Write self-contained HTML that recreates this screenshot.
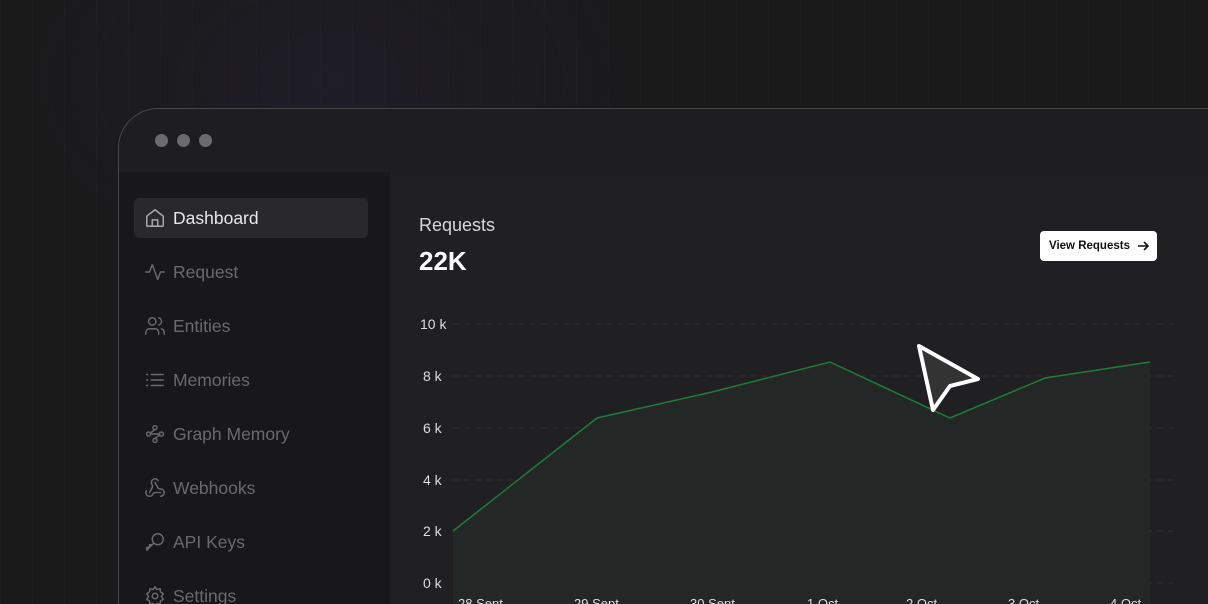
<!DOCTYPE html>
<html style="width:1208px;height:604px;overflow:hidden"><head><meta charset="utf-8"><style>
*{margin:0;padding:0;box-sizing:border-box}
body{width:1208px;height:604px;overflow:hidden;background:#1a1a1b;font-family:"Liberation Sans",sans-serif;position:relative;
background-image:radial-gradient(ellipse 300px 200px at 330px 80px,rgba(45,38,70,.25),transparent),linear-gradient(90deg,rgba(255,255,255,.012) 1px,transparent 1px);background-size:auto,32px 32px}
.win{position:absolute;left:118px;top:108px;width:1120px;height:496px;border:1.5px solid #474749;border-bottom:none;border-radius:40px 0 0 0;background:#1e1e20;overflow:hidden}
.dot{position:absolute;top:25px;width:13px;height:13px;border-radius:50%;background:#6b6b6d}
.side{position:absolute;left:0;top:63px;width:271px;height:500px;background:#18181a}
.main{position:absolute;left:271px;top:63px;width:900px;height:500px;background:#202022}
.item{position:absolute;left:15px;width:234px;height:40px;display:flex;align-items:center;padding-left:10px;color:#6a6a6c;font-size:17.5px}
.item svg{width:22px;height:22px;margin-right:7px;fill:none;stroke:currentColor;stroke-width:1.6;stroke-linecap:round;stroke-linejoin:round}
.act{background:#29292b;border-radius:5px;color:#e8e8e8}
.act svg{stroke:#aaa}
</style></head><body>
<div class="win">
<div class="dot" style="left:36px"></div><div class="dot" style="left:58px"></div><div class="dot" style="left:80px"></div>
<div class="side">
<div class="item act" style="top:26px"><svg viewBox="0 0 24 24"><path d="M3 10l9-7 9 7v10a1 1 0 0 1-1 1H4a1 1 0 0 1-1-1z"/><path d="M9 21v-7h6v7"/></svg>Dashboard</div>
<div class="item" style="top:80px"><svg viewBox="0 0 24 24"><path d="M2 12h4l3-8 6 16 3-8h4"/></svg>Request</div>
<div class="item" style="top:134px"><svg viewBox="0 0 24 24"><circle cx="9" cy="7" r="4"/><path d="M2 21v-2a4 4 0 0 1 4-4h6a4 4 0 0 1 4 4v2M16 3.1a4 4 0 0 1 0 7.8M22 21v-2a4 4 0 0 0-3-3.9"/></svg>Entities</div>
<div class="item" style="top:188px"><svg viewBox="0 0 24 24"><path d="M8 6h13M8 12h13M8 18h13M3 6h1M3 12h1M3 18h1"/></svg>Memories</div>
<div class="item" style="top:242px"><svg viewBox="0 0 24 24"><circle cx="5" cy="12" r="2.2"/><circle cx="12" cy="5" r="2.2"/><circle cx="19" cy="12" r="2.2"/><circle cx="12" cy="19" r="2.2"/><path d="M7 12h10M12 7l-5 4M12 17l5-4"/></svg>Graph Memory</div>
<div class="item" style="top:296px"><svg viewBox="0 0 24 24"><path d="M18 16.98h-5.99c-1.1 0-1.95.94-2.48 1.9A4 4 0 0 1 2 17c.01-.7.2-1.4.57-2M6 17l3.13-5.78c.53-.97.1-2.18-.5-3.1a4 4 0 1 1 6.89-4.06M12 6l3.13 5.73C15.66 12.7 16.9 13 18 13a4 4 0 0 1 0 8"/></svg>Webhooks</div>
<div class="item" style="top:350px"><svg viewBox="0 0 24 24"><circle cx="15" cy="9" r="6"/><path d="M10.5 13.5L3 21v-3h3v-3h3l1.5-1.5"/></svg>API Keys</div>
<div class="item" style="top:404px"><svg viewBox="0 0 24 24"><circle cx="12" cy="12" r="3"/><path d="M12 2l2 3 3.5-1 .5 3.5 3 2-2 3 2 3-3 2-.5 3.5-3.5-1-2 3-2-3-3.5 1L6 17.5l-3-2 2-3-2-3 3-2 .5-3.5L10 5z"/></svg>Settings</div>
</div>
<div class="main"></div>
</div>
<div style="position:absolute;left:419px;top:215px;color:#d8d8d8;font-size:18px">Requests</div>
<div style="position:absolute;left:419px;top:246px;color:#fff;font-size:26px;font-weight:bold">22K</div>
<div style="position:absolute;left:1040px;top:231px;width:117px;height:30px;background:#fff;border-radius:4px;color:#111;font-size:11.5px;font-weight:bold;display:flex;align-items:center;padding-left:9px">View Requests<svg width="14" height="14" viewBox="0 0 14 14" style="margin-left:6px"><path d="M2 7h10M8 3l4 4-4 4" stroke="#111" stroke-width="1.6" fill="none"/></svg></div>
<svg width="1208" height="604" style="position:absolute;left:0;top:0" font-family="Liberation Sans" font-size="14" fill="#ddd">
<g stroke="#2e2e30" stroke-dasharray="6 5"><line x1="453" y1="324" x2="1175" y2="324"/><line x1="453" y1="376" x2="1175" y2="376"/><line x1="453" y1="428" x2="1175" y2="428"/><line x1="453" y1="480" x2="1175" y2="480"/><line x1="453" y1="531" x2="1175" y2="531"/><line x1="453" y1="583" x2="1175" y2="583"/></g>
<text x="420" y="329">10 k</text><text x="423" y="381">8 k</text><text x="423" y="433">6 k</text><text x="423" y="485">4 k</text><text x="423" y="536">2 k</text><text x="423" y="588">0 k</text>
<path d="M453 531L597 418L712 392L830 362L950 418L1045 378L1150 362V604H453Z" fill="#232826"/>
<path d="M453 531L597 418L712 392L830 362L950 418L1045 378L1150 362" stroke="#1f7a3c" stroke-width="1.5" fill="none"/>
<g font-size="13"><text x="458" y="608">28 Sept</text><text x="574" y="608">29 Sept</text><text x="690" y="608">30 Sept</text><text x="807" y="608">1 Oct</text><text x="906" y="608">2 Oct</text><text x="1008" y="608">3 Oct</text><text x="1110" y="608">4 Oct</text></g>
<path d="M919 346L978 379L950 386L933 410Z" fill="#333" stroke="#fff" stroke-width="4" stroke-linejoin="round"/>
</svg>
</body></html>
